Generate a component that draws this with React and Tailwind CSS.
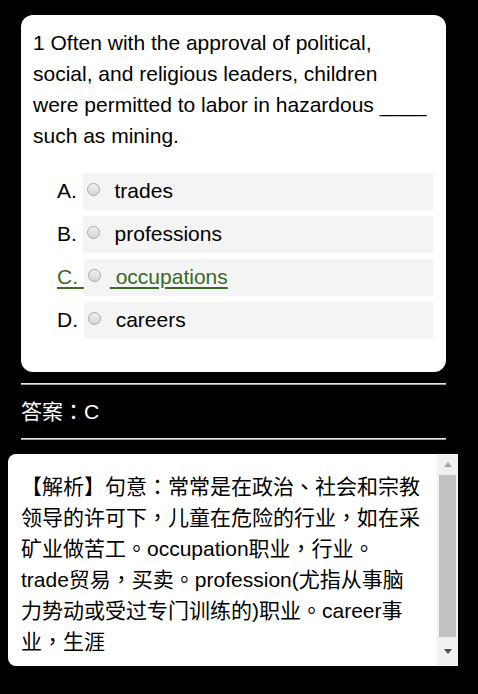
import React from 'react';

const options = [
  { key: 'A', text: 'trades' },
  { key: 'B', text: 'professions' },
  { key: 'C', text: 'occupations', correct: true },
  { key: 'D', text: 'careers' },
];

const Radio = () => (
  <span className="mt-[10px] ml-1 block h-[13px] w-[13px] shrink-0 rounded-full border border-[#a6a6a6] bg-gradient-to-b from-[#f0f0f0] to-[#d6d6d6]" />
);

const Divider = () => (
  <div className="ml-[21px] w-[425px] border-t border-b border-t-[#e4e4e4] border-b-[#a0a0a0]" />
);

const App = () => {
  return (
    <div className="min-h-[694px] bg-black pt-[15px] font-['Liberation_Sans','Noto_Sans_CJK_TC',sans-serif] text-[21px] leading-[31px]">
      {/* question card */}
      <div className="ml-[21px] w-[425px] rounded-[12px] bg-white px-3 pt-3 pb-[33px] text-black">
        <p className="w-[394.5px]">1 Often with the approval of political, social, and religious leaders, children were permitted to labor in hazardous ____ such as mining.</p>
        <div className="mt-[22px] flex flex-col gap-[6px]">
          {options.map((o) => (
            <div key={o.key} className="flex items-start pl-6">
              <span className={`whitespace-pre leading-[36px] ${o.correct ? 'text-[#386a1f] underline decoration-[2px] underline-offset-[3px]' : ''}`}>{o.key}. </span>
              <div className="mr-[1px] flex h-[37px] flex-1 items-start bg-[#f4f4f4]">
                <Radio />
                <span className={`ml-[9px] whitespace-pre leading-[36px] ${o.correct ? 'text-[#386a1f] underline decoration-[2px] underline-offset-[3px]' : ''}`}> {o.text}</span>
              </div>
            </div>
          ))}
        </div>
      </div>

      <div className="mt-[11px]">
        <Divider />
      </div>
      <div className="flex h-[53px] items-center pl-[21px] text-white">答案：C</div>
      <Divider />

      {/* analysis box */}
      <div className="mt-[14px] ml-[8px] flex h-[212px] w-[450px] overflow-hidden rounded-l-[8px] bg-white text-black">
        <div className="flex-1 pl-[13px] pt-[17px]">
          <p className="w-[400px]">【解析】句意：常常是在政治、社会和宗教领导的许可下，儿童在危险的行业，如在采矿业做苦工。occupation职业，行业。trade贸易，买卖。profession(尤指从事脑力势动或受过专门训练的)职业。career事业，生涯</p>
        </div>
        <div className="flex w-[21px] flex-col bg-[#f1f1f1]">
          <div className="flex h-[21px] items-center justify-center">
            <span className="block h-0 w-0 border-x-[4.5px] border-b-[5px] border-x-transparent border-b-[#a3a3a3]" />
          </div>
          <div className="ml-[2px] h-[162px] w-[17px] bg-[#c1c1c1]" />
          <div className="flex flex-1 items-center justify-center">
            <span className="block h-0 w-0 border-x-[4.5px] border-t-[5px] border-x-transparent border-t-[#505050]" />
          </div>
        </div>
      </div>
    </div>
  );
};

export default App;
